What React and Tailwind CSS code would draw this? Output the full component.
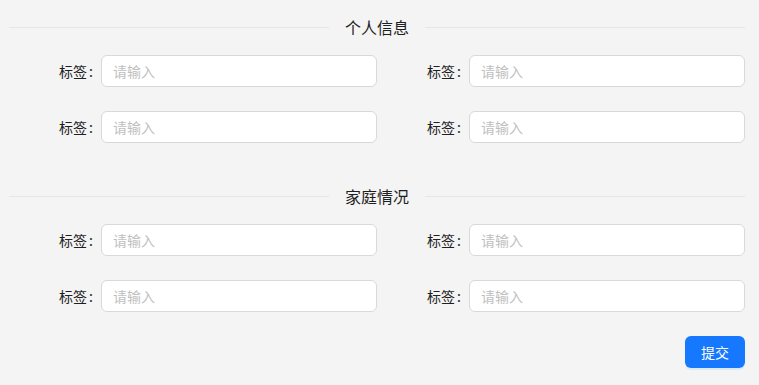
import React from 'react';

const font = { fontFamily: '"Noto Sans CJK SC", "Noto Sans", sans-serif' };

function SectionDivider({ title }) {
  return (
    <div className="mb-4 flex h-6 items-center">
      <div className="h-px flex-1 bg-[#e6e6e6]" />
      <span className="px-4 text-[16px] leading-6 text-[#1f1f1f]">{title}</span>
      <div className="h-px flex-1 bg-[#e6e6e6]" />
    </div>
  );
}

function Field() {
  return (
    <div className="flex items-center">
      <label className="flex w-[92px] shrink-0 justify-end text-[14px] text-[#1f1f1f]">
        标签<span className="ml-[2px] mr-[8px]">:</span>
      </label>
      <input
        placeholder="请输入"
        className="h-8 min-w-0 flex-1 rounded-md border border-[#d9d9d9] bg-white px-[11px] text-[14px] text-[#1f1f1f] outline-none placeholder:text-[#bfbfbf]"
      />
    </div>
  );
}

function FieldGrid() {
  return (
    <div className="grid grid-cols-2 gap-y-6">
      <Field />
      <Field />
      <Field />
      <Field />
    </div>
  );
}

export default function App() {
  return (
    <div className="min-h-screen bg-[#f4f4f4] pt-[15px]" style={font}>
      <div className="ml-[9px] w-[736px] pb-4">
        <SectionDivider title="个人信息" />
        <FieldGrid />
        <div className="h-[41px]" />
        <SectionDivider title="家庭情况" />
        <FieldGrid />
        <div className="mt-6 flex justify-end">
          <button className="h-8 w-[60px] rounded-md bg-[#1677ff] text-[14px] text-white shadow-[0_2px_0_rgba(5,145,255,0.1)]">
            提交
          </button>
        </div>
      </div>
    </div>
  );
}
